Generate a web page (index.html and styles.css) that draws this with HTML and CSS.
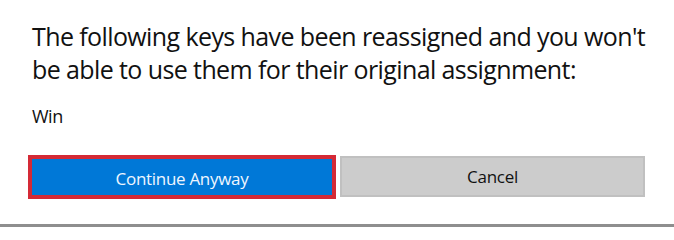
FILE: index.html
```html
<!DOCTYPE html>
<html>
<head>
<meta charset="utf-8">
<link rel="stylesheet" href="styles.css">
</head>
<body>
<div class="dialog">
  <p class="message">The following keys have been reassigned and you won't<br>be able to use them for their original assignment:</p>
  <p class="keys">Win</p>
  <div class="actions">
    <button class="btn btn-primary"><span class="label">Continue Anyway</span></button>
    <button class="btn btn-secondary"><span class="label">Cancel</span></button>
  </div>
</div>
<div class="divider"></div>
</body>
</html>
```
FILE: styles.css
```css
html, body {
  margin: 0;
  padding: 0;
  background: #ffffff;
}

body {
  font-family: "Open Sans", "Noto Sans", sans-serif;
  color: #111111;
  width: 674px;
  height: 229px;
  overflow: hidden;
}

.dialog {
  padding: 20px 0 0 32px;
}

.message {
  margin: 0;
  font-size: 25px;
  line-height: 33px;
  letter-spacing: -0.6px;
  white-space: nowrap;
}

.keys {
  margin: 19px 0 0 0;
  font-size: 18px;
  line-height: 22px;
  letter-spacing: -0.5px;
}

.actions {
  margin-top: 29px;
  display: flex;
  align-items: center;
  gap: 8px;
  height: 41px;
}

.btn {
  margin: 0;
  padding: 0;
  font-family: inherit;
  font-size: 17px;
  letter-spacing: -0.3px;
  line-height: 22px;
  display: flex;
  align-items: center;
  justify-content: center;
  box-sizing: border-box;
}

.btn-primary {
  width: 300px;
  height: 36px;
  background: #0078d7;
  color: #eef6ff;
  border: none;
  outline: 4px solid #d42a36;
  padding-top: 5px;
}

.btn-secondary {
  width: 305px;
  height: 41px;
  background: #cccccc;
  color: #111111;
  border: 2px solid #c0c0c0;
}

.divider {
  margin-top: 27px;
  height: 3px;
  background: #8e8e8e;
}
```
